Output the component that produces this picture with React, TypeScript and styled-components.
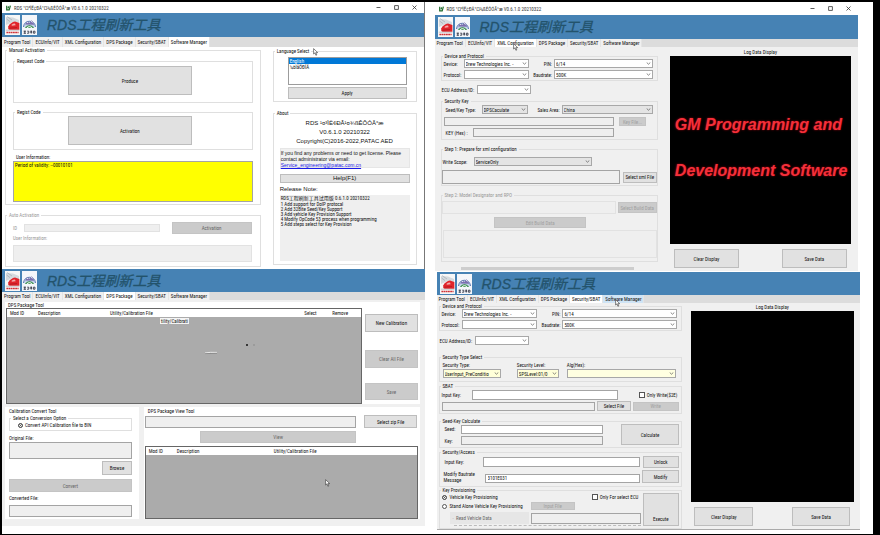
import React from "react";
import styled, { createGlobalStyle, css } from "styled-components";

const UI_FONT = '"Liberation Sans Narrow", "Roboto Condensed", "Open Sans Condensed", Lato, "Noto Sans CJK SC", sans-serif';
const WIDE_FONT = '"Liberation Sans", "Noto Sans CJK SC", sans-serif';

const GlobalStyle = createGlobalStyle`
  *, *::before, *::after { box-sizing: border-box; }
  body { margin: 0; background: #000; font: 5px/6px ${UI_FONT}; color: #111; }
  button, input, select, textarea { font: inherit; color: inherit; margin: 0; border-radius: 0; min-width: 0; }
`;

/* ---------- page and window shells ---------- */

const Board = styled.main`
  margin: 2px 7px 4px 2px;
  padding: 0 15px 4px 0;
  background: #fff;
  display: grid;
  grid-template-columns: minmax(0, 423fr) minmax(0, 424fr);
  column-gap: 10px;
`;
const Column = styled.div`
  display: flex;
  flex-direction: column;
`;
const Win = styled.section<{ $edge?: boolean; $inset?: boolean }>`
  display: flex;
  flex-direction: column;
  border-right: ${(p) => (p.$edge ? "1px solid #777" : "0")};
  border-bottom: ${(p) => (p.$inset ? "1px solid #aaa" : "0")};
  margin: ${(p) => (p.$inset ? "0 -2px 0 2px" : "0")};
`;
const TitleBar = styled.header<{ $tall?: boolean }>`
  height: ${(p) => (p.$tall ? 13 : 11)}px;
  padding: 0 4px;
  display: flex;
  align-items: center;
  gap: 3px;
  background: #fff;
  color: #333;
`;
const TitleText = styled.span`
  flex: 1;
  white-space: nowrap;
`;
const WinButton = styled.button`
  width: 10px;
  height: 8px;
  margin-left: 5px;
  padding: 0;
  border: 0;
  background: none;
  display: grid;
  place-items: center;
`;
const Banner = styled.div<{ $slim?: boolean }>`
  height: ${(p) => (p.$slim ? 23 : 24)}px;
  padding: 0 3px;
  background: #4682b4;
  display: flex;
  align-items: center;
  gap: 2px;
`;
const BannerTitle = styled.h1`
  margin: 0 0 0 8px;
  font: italic 14px/20px ${WIDE_FONT};
  color: #23536c;
  -webkit-text-stroke: 0.3px #23536c;
  white-space: nowrap;
`;
const TabStrip = styled.nav<{ $slim?: boolean }>`
  height: ${(p) => (p.$slim ? 8 : 10)}px;
  display: flex;
  background: #dcdcdc;
`;
const Tab = styled.button<{ $on?: boolean; $hot?: boolean }>`
  padding: 0 2px;
  border: 0;
  border-right: 1px solid #e4e4e4;
  background: ${(p) => (p.$on ? "#fff" : p.$hot ? "#cfe4f5" : "#f0f0f0")};
  line-height: 8px;
  white-space: nowrap;
`;
const Content = styled.div<{ $bg?: string; $pad: string; $gap?: number; $rows?: boolean }>`
  flex: 1;
  display: flex;
  flex-direction: ${(p) => (p.$rows ? "column" : "row")};
  gap: ${(p) => p.$gap || 0}px;
  padding: ${(p) => p.$pad};
  background: ${(p) => p.$bg || "#f0f0f0"};
`;
const Pane = styled.div<{ $grow: number; $bg?: string; $pad?: string }>`
  flex: ${(p) => p.$grow} 1 0;
  min-width: 0;
  display: flex;
  flex-direction: column;
  background: ${(p) => p.$bg || "transparent"};
  padding: ${(p) => p.$pad || "0"};
`;

/* ---------- form parts ---------- */

const GroupFrame = styled.fieldset<{ $top?: number; $off?: boolean }>`
  margin: ${(p) => p.$top || 0}px 0 0;
  min-width: 0;
  border: 1px solid #dfdfdf;
  padding: 0;
  color: ${(p) => (p.$off ? "#999" : "inherit")};
`;
const GroupTitle = styled.legend`
  margin-left: 1px;
  padding: 0 2px;
  height: 6px;
`;
const GroupBody = styled.div<{ $pad: string }>`
  padding: ${(p) => p.$pad};
`;
interface GroupProps {
  title: string;
  pad: string;
  top?: number;
  off?: boolean;
  children: React.ReactNode;
}
function Group({ title, pad, top, off, children }: GroupProps) {
  return (
    <GroupFrame $top={top} $off={off}>
      <GroupTitle>{title}</GroupTitle>
      <GroupBody $pad={pad}>{children}</GroupBody>
    </GroupFrame>
  );
}

const Row = styled.div<{ $cols: string; $top?: number; $gap?: number; $align?: string }>`
  display: grid;
  grid-template-columns: ${(p) => p.$cols};
  column-gap: ${(p) => p.$gap ?? 2}px;
  align-items: ${(p) => p.$align || "center"};
  margin-top: ${(p) => p.$top || 0}px;
`;
const Label = styled.label<{ $top?: number; $left?: number; $right?: boolean }>`
  display: block;
  margin-top: ${(p) => p.$top || 0}px;
  padding-left: ${(p) => p.$left || 0}px;
  text-align: ${(p) => (p.$right ? "right" : "left")};
  white-space: nowrap;
`;
const fieldLook = css<{ $h: number; $off?: boolean; $grey?: boolean; $top?: number }>`
  display: block;
  width: 100%;
  height: ${(p) => p.$h}px;
  margin-top: ${(p) => p.$top || 0}px;
  padding: 0 2px;
  border: 1px solid ${(p) => (p.$off ? "#e2e2e2" : "#a4a4a4")};
  background: ${(p) => (p.$off || p.$grey ? "#efefef" : "#fff")};
  outline: 0;
`;
const Field = styled.input`
  ${fieldLook}
`;
const Area = styled.textarea<{ $fill?: string; $h: number; $off?: boolean; $grey?: boolean; $top?: number }>`
  ${fieldLook}
  padding: 0 1px;
  resize: none;
  overflow: hidden;
  ${(p) => p.$fill && `background: ${p.$fill};`}
`;
const Push = styled.button<{ $h: number; $top?: number; $off?: boolean; $low?: boolean }>`
  display: block;
  width: 100%;
  height: ${(p) => p.$h}px;
  margin-top: ${(p) => p.$top || 0}px;
  padding: ${(p) => (p.$low ? "18px 0 0" : "0")};
  border: 1px solid ${(p) => (p.$off ? "#c4c4c4" : "#bdbdbd")};
  background: ${(p) => (p.$off ? "#cbcbcb" : "#e1e1e1")};
  color: ${(p) => (p.$off === true ? "#666" : "inherit")};
  white-space: nowrap;
`;
const FaintPush = styled(Push)`
  color: #a0a0a0;
`;
const Indent = styled.div<{ $pad: string }>`
  padding: ${(p) => p.$pad};
`;
const ComboBox = styled.span`
  position: relative;
  display: block;
  svg {
    position: absolute;
    right: 2px;
    top: 3px;
    pointer-events: none;
  }
`;
const ComboSelect = styled.select<{ $tint?: string }>`
  appearance: none;
  display: block;
  width: 100%;
  height: 9px;
  padding: 0 1px;
  border: 1px solid #a8a8a8;
  background: ${(p) => p.$tint || "#fff"};
  outline: 0;
`;
const Choice = styled.label<{ $gap?: number }>`
  display: flex;
  align-items: center;
  gap: ${(p) => p.$gap ?? 2}px;
  white-space: nowrap;
`;
const Radio = styled.input`
  appearance: none;
  flex: none;
  width: 5px;
  height: 5px;
  border: 1px solid #555;
  border-radius: 50%;
  background: #fff;
  &:checked { background: #222; box-shadow: inset 0 0 0 1px #fff; }
`;
const Tick = styled.input`
  appearance: none;
  flex: none;
  width: 6px;
  height: 6px;
  border: 1px solid #555;
  background: #fff;
`;

function Combo({ id, value = "", tint, aria }: { id?: string; value?: string; tint?: string; aria?: string }) {
  return (
    <ComboBox>
      <ComboSelect id={id} $tint={tint} aria-label={aria} defaultValue={value}>
        <option>{value}</option>
      </ComboSelect>
      <svg width="5" height="3" viewBox="0 0 5 3" fill="none" stroke="#555" strokeWidth="0.7">
        <path d="M0.7 0.5 L2.5 2.2 L4.3 0.5" />
      </svg>
    </ComboBox>
  );
}

/* ---------- drawings ---------- */

const AppIcon = () => (
  <svg width="5" height="6" viewBox="0 0 5 6" fill="none" stroke="#1f6b2c" strokeWidth="1.2">
    <path d="M0.7 0.8 V4.8 H3.2 L4.4 0.6 M2.6 1.4 L2.1 3.4" />
  </svg>
);

const TrainLogo = () => (
  <svg width="15" height="20" viewBox="0 0 15 20">
    <rect width="15" height="20" fill="#f7f7f7" />
    <path d="M1 2 L8 2.5 L14 5 V8 L8 7 L1 10 Z" fill="#d5dade" />
    <path d="M2 1.5 L7 5 M1.6 4 L5 6.6" stroke="#9aa5ac" strokeWidth="0.6" />
    <path d="M3.2 11.5 Q5.6 7.4 10 6.6 L14.4 8 V14.8 H4.6 Q2.6 14 3.2 11.5 Z" fill="#e0242b" />
    <path d="M6.6 9.8 Q8 8.6 10 8.6 L10.6 10.2 L6.8 10.8 Z" fill="#f3a9a9" />
    <path d="M4.4 13.2 L12 12.6" stroke="#a8151b" strokeWidth="0.7" />
    <path d="M0.8 15.2 H14.4" stroke="#8b9196" strokeWidth="0.5" />
    <path d="M1.4 17.4 H13.6" stroke="#cf3338" strokeWidth="1.5" strokeDasharray="1.8 0.4" />
  </svg>
);

const MountainLogo = () => (
  <svg width="15" height="20" viewBox="0 0 15 20">
    <rect width="15" height="20" fill="#f4f6fa" />
    <path d="M1.4 12 A6.2 7 0 0 1 13.6 12" fill="#c4d3ea" stroke="#5570ad" strokeWidth="0.9" />
    <path d="M3 9.5 L5.4 6.4 L7.4 8 L9.6 5.2 L12.4 9.8 Z" fill="#7b6fae" />
    <path d="M5 7 L6 8 M9 6 L10.4 7.6" stroke="#fff" strokeWidth="0.8" />
    <path d="M2.6 13 Q7.5 7 12.4 13 Z" fill="#4e9a60" />
    <path d="M4.6 13.4 Q7.4 9.8 10.4 13.4" fill="none" stroke="#fff" strokeWidth="0.9" />
    <path d="M1.6 16.2 H4 M1.6 18.2 H4 M2.8 15.8 V18.6 M5.2 16.2 H6.8 V18.2 H5 M8.4 16.2 H10 M8.2 17.2 H10.2 M9.2 15.8 V18.6 M11.4 16.2 H13 V18.2 H11.4 V16.2" fill="none" stroke="#252a3a" strokeWidth="0.8" />
  </svg>
);

const PointerSpot = styled.svg<{ $x: string; $y: string }>`
  position: absolute;
  left: ${(p) => p.$x};
  top: ${(p) => p.$y};
  z-index: 2;
`;
const Pointer = ({ x, y }: { x: string; y: string }) => (
  <PointerSpot $x={x} $y={y} width="6" height="8" viewBox="0 0 6 8">
    <path d="M0.6 0.6 V6 L1.9 4.9 L2.9 7.3 L3.8 6.9 L2.8 4.6 H4.7 Z" fill="#fff" stroke="#333" strokeWidth="0.6" />
  </PointerSpot>
);
const Anchor = styled.div`
  position: relative;
`;

/* ---------- shared window pieces ---------- */

const APP_NAME = "RDS ¹¤³ÌË¢ÐÂ¹¤¾ßÊÔÓÃ°æ";
const VERSION = "V0.6.1.0 20210322";
const TABS = ["Program Tool", "ECUInfo/VIT", "XML Configuration", "DPS Package", "Security/SBAT", "Software Manager"];

function Title({ tall }: { tall?: boolean }) {
  return (
    <TitleBar $tall={tall}>
      <AppIcon />
      <TitleText>{APP_NAME} {VERSION}</TitleText>
      <WinButton aria-label="Minimize">
        <svg width="5" height="5" viewBox="0 0 5 5" stroke="#333" strokeWidth="0.8"><path d="M0.5 2.5 H4.5" /></svg>
      </WinButton>
      <WinButton aria-label="Maximize">
        <svg width="5" height="5" viewBox="0 0 5 5" stroke="#333" strokeWidth="0.8" fill="none"><path d="M0.6 0.6 H4.4 V4.4 H0.6 Z" /></svg>
      </WinButton>
      <WinButton aria-label="Close">
        <svg width="5" height="5" viewBox="0 0 5 5" stroke="#333" strokeWidth="0.8"><path d="M0.5 0.5 L4.5 4.5 M4.5 0.5 L0.5 4.5" /></svg>
      </WinButton>
    </TitleBar>
  );
}

interface HeadProps {
  active: string;
  hot?: string;
  slimBanner?: boolean;
  slimTabs?: boolean;
  children?: React.ReactNode;
}
function Head({ active, hot, slimBanner, slimTabs, children }: HeadProps) {
  return (
    <Anchor>
      <Banner $slim={slimBanner}>
        <TrainLogo />
        <MountainLogo />
        <BannerTitle>RDS工程刷新工具</BannerTitle>
      </Banner>
      <TabStrip $slim={slimTabs}>
        {TABS.map((t) => (
          <Tab key={t} $on={t === active} $hot={t === hot}>{t}</Tab>
        ))}
      </TabStrip>
      {children}
    </Anchor>
  );
}

/* ---------- software manager ---------- */

const LangList = styled.select`
  display: block;
  width: 100%;
  height: 28px;
  padding: 0;
  border: 1px solid #9c9c9c;
  background: #fff;
  overflow: hidden;
  outline: 0;
  option { padding: 0 1px; min-height: 6px; line-height: 6px; }
  option:checked { background: linear-gradient(#0078d7, #0078d7); color: #fff; }
`;
const AboutText = styled.div`
  font: 6px/9px ${WIDE_FONT};
  text-align: center;
  white-space: nowrap;
`;
const Notice = styled.p`
  margin: 2px 0 0;
  padding: 1px 0;
  height: 20px;
  background: #f0f0f0;
  border: 1px solid #e6e6e6;
  font: 5px/6px ${WIDE_FONT};
  white-space: nowrap;
  a { color: #1a1ae6; }
`;
const WidePush = styled(Push)`
  font: 6px/7px ${WIDE_FONT};
`;
const WideLabel = styled(Label)`
  font: 6px/6px ${WIDE_FONT};
`;
const Notes = styled.ol`
  list-style: none;
  margin: 3px 0 0;
  padding: 1px;
  height: 66px;
  background: #efefef;
  line-height: 5px;
  white-space: nowrap;
  li:first-child { margin-bottom: 1px; }
`;

function SoftwareManager() {
  return (
    <Win $edge>
      <Title />
      <Head active="Software Manager"><Pointer x="311px" y="35px" /></Head>
      <Content $bg="#fff" $pad="0 7px 2px 3px" $gap={12}>
        <Pane $grow={256}>
          <Group title="Manual Activation" pad="5px 7px 2px">
            <Group title="Request Code" pad="2px 60px 7px 54px">
              <Push $h={29}>Produce</Push>
            </Group>
            <Group title="Regist Code" pad="1px 60px 4px 54px" top={6}>
              <Push $h={29}>Activation</Push>
            </Group>
            <Label htmlFor="info" $top={4} $left={3}>User Information:</Label>
            <Area id="info" $h={41} $top={1} $fill="#ff0" defaultValue="Period of validity: --00010101" />
          </Group>
          <Group title="Auto Activation" pad="4px 8px 4px 7px" top={7} off>
            <Row $cols="9px 138fr 76fr" $gap={2}>
              <Label htmlFor="aid">ID</Label>
              <Indent $pad="0 10px 0 0"><Field id="aid" $h={8} $off /></Indent>
              <Push $h={12} $off>Activation</Push>
            </Row>
            <Label htmlFor="ainfo" $top={1}>User Information:</Label>
            <Area id="ainfo" $h={17} $top={4} $off />
          </Group>
        </Pane>
        <Pane $grow={144} $pad="1px 0 0">
          <Group title="Language Select" pad="3px 9px 2px 14px">
            <LangList size={4} defaultValue="English" aria-label="Language">
              <option>English</option>
              <option>¼òÌåÖÐÎÄ</option>
            </LangList>
            <Push $h={12} $top={2}>Apply</Push>
          </Group>
          <Group title="About" pad="3px 6px 3px" top={8}>
            <AboutText>{APP_NAME}</AboutText>
            <AboutText>{VERSION}</AboutText>
            <AboutText>Copyright(C)2016-2022,PATAC AED</AboutText>
            <Notice>
              If you find any problems or need to get license. Please<br />
              contact administrator via email:<br />
              <a href="mailto:Service_engineering@patac.com.cn">Service_engineering@patac.com.cn</a>
            </Notice>
            <WidePush $h={9} $top={6}>Help(F1)</WidePush>
            <WideLabel as="div" $top={3}>Release Note:</WideLabel>
            <Notes>
              <li>RDS工程刷新工具试用版 0.6.1.0 20210322</li>
              <li>1 Add support for DoIP protocal</li>
              <li>2 Add 32Bite Seed/Key Support</li>
              <li>3 Add vehicle Key Provision Support</li>
              <li>4 Modify OpCode 53 process when programming</li>
              <li>5 Add steps select for Key Provision</li>
            </Notes>
          </Group>
        </Pane>
      </Content>
    </Win>
  );
}

/* ---------- DPS package ---------- */

const Grid = styled.table<{ $h: number; $top?: number }>`
  width: 100%;
  height: ${(p) => p.$h}px;
  margin-top: ${(p) => p.$top || 0}px;
  border: 1px solid #666;
  border-collapse: separate;
  border-spacing: 0;
  table-layout: fixed;
  background: #ababab;
  th { height: 8px; padding: 0 0 0 3px; background: #fff; font-weight: 400; text-align: left; white-space: nowrap; }
  td { padding: 0; vertical-align: top; }
`;
const Ghost = styled.span`
  display: inline-block;
  margin: 1px 0 0 53px;
  padding: 0 1px;
  background: #f4f4f4;
`;
const Scratch = styled.svg`
  display: block;
  margin: 18px 0 0 95px;
`;
const White = styled.div<{ $pad: string }>`
  background: #fff;
  padding: ${(p) => p.$pad};
`;

function DpsPackage() {
  return (
    <Win>
      <Head active="DPS Package" slimBanner slimTabs />
      <Content $pad="2px 5px 7px 3px" $gap={3} $rows>
        <White $pad="0 2px 0 1px">
          <Label as="div" $left={2}>DPS Package Tool</Label>
          <Row $cols="minmax(0, 356fr) minmax(0, 52fr)" $gap={3} $align="start">
            <Grid $h={96}>
              <colgroup><col width="28" /><col width="72" /><col width="194" /><col width="28" /><col width="32" /></colgroup>
              <thead>
                <tr><th>Mod ID</th><th>Description</th><th>Utility/Calibration File</th><th>Select</th><th>Remove</th></tr>
              </thead>
              <tbody>
                <tr>
                  <td /><td />
                  <td colSpan={3}>
                    <Ghost>tility/Calibrati</Ghost>
                    <Scratch width="60" height="20" viewBox="0 0 60 20">
                      <path d="M3 11 Q8 10 15 10.4" stroke="#fff" strokeWidth="0.8" fill="none" />
                      <path d="M3 11.6 L15 11.2" stroke="#666" strokeWidth="0.5" />
                      <circle cx="45" cy="3" r="1" fill="#111" />
                      <path d="M51 3 H53" stroke="#777" strokeWidth="0.6" />
                    </Scratch>
                  </td>
                </tr>
              </tbody>
            </Grid>
            <div>
              <Push $h={18} $top={6}>New Calibration</Push>
              <Push $h={18} $top={18} $off>Clear All File</Push>
              <Push $h={17} $top={15} $off>Save</Push>
            </div>
          </Row>
        </White>
        <Row $cols="minmax(0, 134fr) minmax(0, 276fr)" $gap={5} $align="stretch">
          <White $pad="1px 7px 0 4px">
            <Label as="div">Calibration Convert Tool</Label>
            <Group title="Select a Conversion Option" pad="1px 8px 2px" top={1}>
              <Choice><Radio type="radio" name="conv" defaultChecked />Convert API Calibration file to BIN</Choice>
            </Group>
            <Label htmlFor="orig" $top={4}>Original File:</Label>
            <Area id="orig" $h={17} $top={1} $grey />
            <Row $cols="94fr 30fr" $gap={0} $top={2}><span /><Push $h={14}>Browse</Push></Row>
            <Push $h={13} $top={4} $off>Convert</Push>
            <Label htmlFor="conv" $top={3}>Converted File:</Label>
            <Area id="conv" $h={12} $top={4} $grey />
          </White>
          <White $pad="1px 2px 0 1px">
            <Label as="div" $left={3}>DPS Package View Tool</Label>
            <Row $cols="209fr 53fr" $gap={8} $top={1}>
              <Field aria-label="Package file" $h={12} $grey />
              <Push $h={13}>Select zip File</Push>
            </Row>
            <Row $cols="55fr 154fr 61fr" $gap={0} $top={3}><span /><Push $h={12} $off>View</Push><span /></Row>
            <Anchor>
              <Grid $h={73} $top={3}>
                <colgroup><col width="28" /><col width="97" /><col /></colgroup>
                <thead><tr><th>Mod ID</th><th>Description</th><th>Utility/Calibration File</th></tr></thead>
                <tbody><tr><td colSpan={3} /></tr></tbody>
              </Grid>
              <Pointer x="66%" y="33px" />
            </Anchor>
          </White>
        </Row>
      </Content>
    </Win>
  );
}

/* ---------- log pane ---------- */

const LogCaption = styled.h2`
  margin: 0;
  font: inherit;
  text-align: center;
`;
const Screen = styled.output`
  flex: 1;
  margin-top: 1px;
  padding: 46px 5px;
  background: #000;
  color: #f4303a;
  text-shadow: 0 0 2px #b00010;
  font: italic bold 16px/46px "Liberation Sans", sans-serif;
  white-space: nowrap;
`;

function Log({ lines = [], grow, pad, top }: { lines?: string[]; grow: number; pad: string; top: number }) {
  return (
    <Pane $grow={grow} $pad={pad}>
      <LogCaption>Log Data Display</LogCaption>
      <Screen>{lines.map((l) => <div key={l}>{l}</div>)}</Screen>
      <Row $cols="4fr 64fr 42fr 64fr 4fr" $gap={0} $top={top}>
        <span /><Push $h={19}>Clear Display</Push><span /><Push $h={19}>Save Data</Push><span />
      </Row>
    </Pane>
  );
}

/* ---------- XML configuration ---------- */

function DeviceGroup({ p }: { p: string }) {
  return (
    <Group title="Device and Protocol" pad="0 4px 1px 2px">
      <Row $cols="18px 65fr 21px 98fr">
        <Label htmlFor={p + "dev"}>Device:</Label><Combo id={p + "dev"} value="Drew Technologies Inc. -" />
        <Label htmlFor={p + "pin"} $right>PIN:</Label><Combo id={p + "pin"} value="6/14" />
      </Row>
      <Row $cols="18px 65fr 21px 98fr" $top={2}>
        <Label htmlFor={p + "pro"}>Protocol:</Label><Combo id={p + "pro"} />
        <Label htmlFor={p + "baud"} $right>Baudrate:</Label><Combo id={p + "baud"} value="500K" />
      </Row>
    </Group>
  );
}

const ScrollTrack = styled.div`
  height: 3px;
  margin: 5px 24px 0 20px;
  background: #cdcdcd;
`;

function XmlConfiguration() {
  return (
    <Win>
      <Title tall />
      <Head active="XML Configuration" slimTabs><Pointer x="78px" y="28px" /></Head>
      <Content $pad="0 4px 1px 6px" $gap={12}>
        <Pane $grow={216} $pad="6px 0 0">
          <DeviceGroup p="x" />
          <Row $cols="35px 54px" $top={4} $gap={1}>
            <Label htmlFor="xecu" $left={1}>ECU Address/ID:</Label><Combo id="xecu" />
          </Row>
          <Group title="Security Key" pad="1px 4px 2px 2px" top={4}>
            <Row $cols="36px 46fr 30px 91fr">
              <Label htmlFor="skt" $left={2}>Seed/Key Type:</Label><Combo id="skt" value="DPSCaculate" tint="#e4e4e4" />
              <Label htmlFor="sa" $right>Sales Area:</Label><Combo id="sa" value="China" tint="#e4e4e4" />
            </Row>
            <Row $cols="173fr 27fr 2fr" $gap={5} $top={3}>
              <Field aria-label="Key" $h={9} $grey /><FaintPush $h={9} $off>Key File...</FaintPush>
            </Row>
            <Row $cols="27px 144fr 37fr" $top={2}>
              <Label htmlFor="khex" $left={2}>KEY (Hex) :</Label><Field id="khex" $h={9} $grey />
            </Row>
          </Group>
          <Group title="Step 1: Prepare for xml configuration" pad="5px 0 1px" top={6}>
            <Row $cols="30px 117fr 62fr">
              <Label htmlFor="ws" $left={1}>Write Scope:</Label><Combo id="ws" value="ServiceOnly" tint="#e4e4e4" />
            </Row>
            <Row $cols="177fr 34fr" $top={4} $gap={3}>
              <Field aria-label="XML file" $h={14} $grey /><Push $h={11}>Select xml File</Push>
            </Row>
          </Group>
          <Group title="Step 2: Model Designator and RPO" pad="3px 0 3px" top={6} off>
            <Row $cols="173fr 39fr">
              <Field aria-label="Build data" $h={13} $off /><FaintPush $h={11} $off>Select Build Data</FaintPush>
            </Row>
            <Row $cols="52fr 92fr 70fr" $gap={0} $top={3}><span /><FaintPush $h={11} $off>Edit Build Data</FaintPush></Row>
            <Indent $pad="0 0 0 1px"><Area aria-label="Designators" $h={28} $top={2} $off /></Indent>
          </Group>
          <ScrollTrack />
        </Pane>
        <Log grow={180} pad="2px 3px 2px 0" top={5} lines={["GM Programming and", "Development Software"]} />
      </Content>
    </Win>
  );
}

/* ---------- security / SBAT ---------- */

const ReadPanel = styled.div`
  padding: 3px 4px 3px 3px;
  background: #e6e6e6;
  color: #666;
`;
const Clip = styled.div`
  height: 3px;
  margin: 1px 0 0 12px;
  border-top: 1px dashed #bbb;
`;

function SecuritySbat() {
  return (
    <Win $inset>
      <Head active="Security/SBAT" hot="Software Manager" slimBanner slimTabs><Pointer x="178px" y="27px" /></Head>
      <Content $pad="0 6px 0 2px" $gap={9}>
        <Pane $grow={243}>
          <DeviceGroup p="s" />
          <Row $cols="35px 54px" $top={5} $gap={1}>
            <Label htmlFor="secu" $left={1}>ECU Address/ID:</Label><Combo id="secu" />
          </Row>
          <Group title="Security Type Select" pad="2px 5px 3px 3px" top={9}>
            <Row $cols="57fr 16fr 41fr 8fr 107fr" $gap={0}>
              <Label htmlFor="st">Security Type:</Label><span />
              <Label htmlFor="sl">Security Level:</Label><span />
              <Label htmlFor="alg">Alg(Hex):</Label>
            </Row>
            <Row $cols="57fr 16fr 41fr 8fr 107fr" $gap={0} $top={1}>
              <Combo id="st" value="UserInput_PreConditio" tint="#ffffd8" /><span />
              <Combo id="sl" value="SPSLevel:01/0" tint="#ffffd8" /><span />
              <Combo id="alg" tint="#ffffe1" />
            </Row>
          </Group>
          <Group title="SBAT" pad="1px 2px 2px" top={1}>
            <Row $cols="28px 148fr 17fr 40px">
              <Label htmlFor="sik">Input Key:</Label><Field id="sik" $h={10} /><span />
              <Choice><Tick type="checkbox" />Only Write($2E)</Choice>
            </Row>
            <Row $cols="153fr 33fr 46fr" $top={1}>
              <Field aria-label="SBAT file" $h={9} $grey /><Push $h={10}>Select File</Push><FaintPush $h={9} $off>Write</FaintPush>
            </Row>
          </Group>
          <Group title="Seed-Key Calculate" pad="0 2px 2px" top={4}>
            <Row $cols="181fr 58fr" $gap={0} $align="start">
              <div>
                <Row $cols="19px 140fr 18fr" $gap={0}><Label htmlFor="seed" $left={3}>Seed:</Label><Field id="seed" $h={9} $top={1} /></Row>
                <Row $cols="19px 140fr 18fr" $gap={0} $top={2}><Label htmlFor="key" $left={3}>Key:</Label><Field id="key" $h={9} $grey /></Row>
              </div>
              <Push $h={21}>Calculate</Push>
            </Row>
          </Group>
          <Group title="Security/Access" pad="1px 2px 3px" top={1}>
            <Row $cols="38px 157fr 36fr" $gap={3}>
              <Label htmlFor="aik" $left={3}>Input Key:</Label><Field id="aik" $h={10} /><Push $h={12}>Unlock</Push>
            </Row>
            <Row $cols="41px 154fr 36fr" $gap={2} $top={2}>
              <Label htmlFor="mod" $left={2}>Modify Bautrate<br />Message</Label><Field id="mod" $h={9} $top={3} defaultValue="3101E031" /><Push $h={13}>Modify</Push>
            </Row>
          </Group>
          <Group title="Key Provisioning" pad="0 2px 0" top={0}>
            <Row $cols="199fr 36fr" $gap={2} $align="stretch">
              <div>
                <Row $cols="145fr 49px" $gap={2} $top={1}>
                  <Choice $gap={3}><Radio type="radio" name="kp" defaultChecked />Vehicle Key Provisioning</Choice>
                  <Choice><Tick type="checkbox" />Only For select ECU</Choice>
                </Row>
                <Row $cols="87fr 44fr 64fr" $gap={2} $top={2}>
                  <Choice $gap={3}><Radio type="radio" name="kp" />Stand Alone Vehicle Key Provisioning</Choice>
                  <FaintPush $h={8} $off>Input File</FaintPush>
                </Row>
                <Row $cols="87fr 110fr" $gap={2} $top={2}>
                  <Indent $pad="0 0 0 8px"><ReadPanel>·&nbsp; Read Vehicle Data</ReadPanel></Indent>
                  <Field aria-label="Provisioning file" $h={11} $grey />
                </Row>
                <Clip />
              </div>
              <Push $h={33} $low>Execute</Push>
            </Row>
          </Group>
        </Pane>
        <Log grow={163} pad="1px 0 3px" top={5} />
      </Content>
    </Win>
  );
}

const Gap = styled.div`
  height: 1px;
`;

export default function App() {
  return (
    <>
      <GlobalStyle />
      <Board>
        <Column>
          <SoftwareManager />
          <DpsPackage />
        </Column>
        <Column>
          <XmlConfiguration />
          <Gap />
          <SecuritySbat />
        </Column>
      </Board>
    </>
  );
}
